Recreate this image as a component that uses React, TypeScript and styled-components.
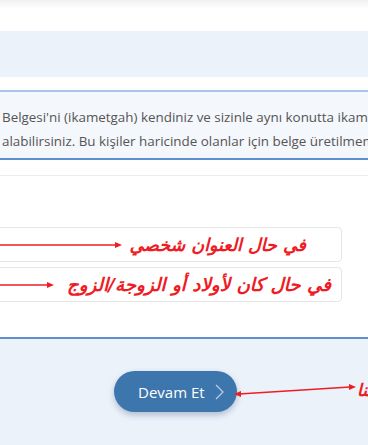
import React from "react";
import styled, { createGlobalStyle } from "styled-components";

const Global = createGlobalStyle`
  html, body { margin: 0; padding: 0; background: #fff; }
  body { width: 368px; height: 445px; overflow: hidden; font-family: "Open Sans", "Noto Sans", sans-serif; }
`;

const Page = styled.div`
  width: 368px;
  height: 445px;
  display: flex;
  flex-direction: column;
  overflow: hidden;
`;

const TopBar = styled.div`
  height: 31px;
  background: linear-gradient(#f1f1f1 0px, #fff 9px);
`;

const Band = styled.div`
  height: 46px;
  background: #ebf2fa;
`;

const Gap = styled.div<{ h: number }>`
  height: ${(p) => p.h}px;
`;

const InfoBox = styled.div`
  border-top: 2px solid #a9c4e6;
  border-bottom: 2px solid #5d8fcf;
  background: #f4f7fb;
  padding: 13px 0 0 2px;
  box-sizing: border-box;
  height: 70px;
  overflow: hidden;
`;

const InfoLine = styled.div`
  white-space: nowrap;
  font-size: 13.4px;
  line-height: 24px;
  color: #555;
`;

const Divider = styled.div`
  height: 1px;
  background: #ececec;
`;

const Options = styled.div`
  display: flex;
  flex-direction: column;
  gap: 5px;
  padding-top: 51px;
  height: 161px;
  box-sizing: border-box;
`;

const OptionBox = styled.div<{ pr: number }>`
  width: 350px;
  margin-left: -8px;
  height: 35px;
  box-sizing: border-box;
  border: 1px solid #e6e6e6;
  border-radius: 4px;
  display: flex;
  align-items: center;
  justify-content: space-between;
  padding-right: ${(p) => p.pr}px;
`;

const ArabicNote = styled.span<{ size?: number }>`
  font-family: "DejaVu Sans", sans-serif;
  font-weight: bold;
  font-style: italic;
  color: #ee1c25;
  font-size: ${(p) => p.size ?? 17.5}px;
  direction: rtl;
  white-space: nowrap;
  line-height: 22px;
`;

const Footer = styled.div`
  flex: 1;
  border-top: 2px solid #5d8fcf;
  background: #ebf2fa;
  position: relative;
`;

const ButtonRow = styled.div`
  display: flex;
  align-items: center;
  padding: 32px 0 0 114px;
`;

const ContinueButton = styled.button`
  width: 123px;
  height: 41px;
  border: none;
  border-radius: 21px;
  background: #3d76ad;
  color: #fff;
  font-family: "Open Sans", sans-serif;
  font-size: 15px;
  display: flex;
  align-items: center;
  justify-content: flex-start;
  padding: 0 0 0 24px;
  gap: 10px;
  box-shadow: 0 3px 6px rgba(40, 70, 110, 0.3);
`;

const Callout = styled.div`
  position: absolute;
  left: 234px;
  top: 40px;
  display: flex;
  align-items: center;
`;

const CalloutText = styled(ArabicNote)`
  margin-left: 1px;
`;

const Arrow = ({ w }: { w: number }) => (
  <svg width={w} height="8" viewBox={`0 0 ${w} 8`} style={{ display: "block", flexShrink: 0 }}>
    <line x1="0" y1="4" x2={w - 6} y2="4" stroke="#ee1c25" strokeWidth="1.6" />
    <polygon points={`${w - 7},1 ${w},4 ${w - 7},7`} fill="#ee1c25" />
  </svg>
);

const Chevron = () => (
  <svg width="9" height="16" viewBox="0 0 9 16">
    <polyline points="1,1 8,8 1,15" fill="none" stroke="#b9cde2" strokeWidth="1.3" />
  </svg>
);

export default function App() {
  return (
    <Page>
      <Global />
      <TopBar />
      <Band />
      <Gap h={13} />
      <InfoBox>
        <InfoLine>Belgesi'ni (ikametgah) kendiniz ve sizinle aynı konutta ikamet eden</InfoLine>
        <InfoLine>alabilirsiniz. Bu kişiler haricinde olanlar için belge üretilmemektedir.</InfoLine>
      </InfoBox>
      <Gap h={15} />
      <Divider />
      <Options>
        <OptionBox pr={35}>
          <Arrow w={129} />
          <ArabicNote>في حال العنوان شخصي</ArabicNote>
        </OptionBox>
        <OptionBox pr={10}>
          <Arrow w={61} />
          <ArabicNote size={18.3}>في حال كان لأولاد أو الزوجة/الزوج</ArabicNote>
        </OptionBox>
      </Options>
      <Footer>
        <ButtonRow>
          <ContinueButton>
            Devam Et <Chevron />
          </ContinueButton>
        </ButtonRow>
        <Callout>
          <svg width="122" height="14" viewBox="0 0 122 14" style={{ display: "block" }}>
            <line x1="5" y1="11" x2="116" y2="4" stroke="#ee1c25" strokeWidth="1.6" />
            <polygon points="0,11 7,8 7,14" fill="#ee1c25" />
            <polygon points="122,4 115,1 115,7" fill="#ee1c25" />
          </svg>
          <CalloutText size={17}>لنا</CalloutText>
        </Callout>
      </Footer>
    </Page>
  );
}
